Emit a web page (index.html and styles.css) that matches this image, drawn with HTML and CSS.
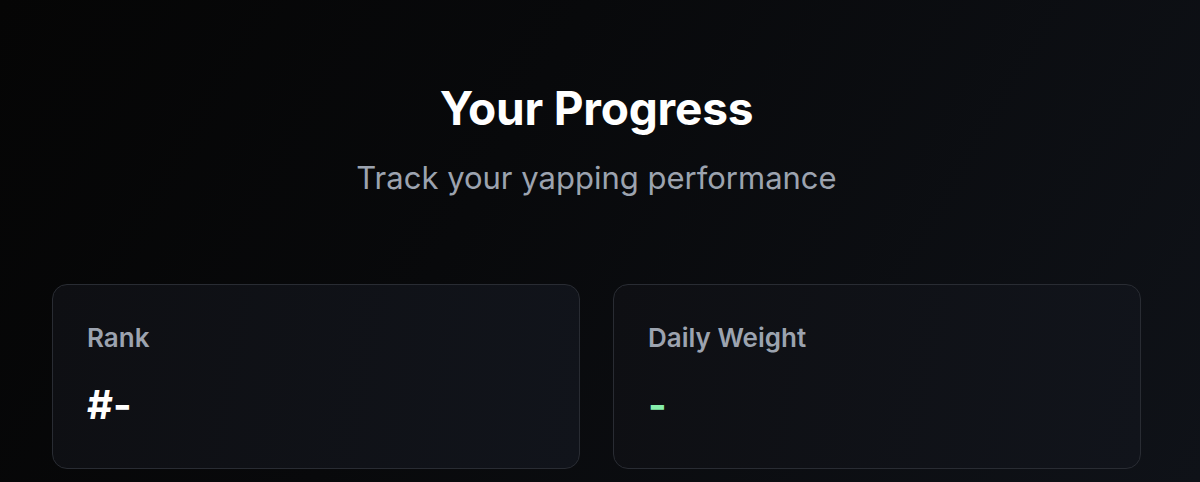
FILE: index.html
```html
<!DOCTYPE html>
<html lang="en">
<head>
  <meta charset="UTF-8" />
  <meta name="viewport" content="width=device-width, initial-scale=1.0" />
  <title>Your Progress</title>
  <link rel="stylesheet" href="styles.css">
</head>
<body>
  <section class="progress">
    <h1 class="progress-title">Your Progress</h1>
    <p class="progress-sub">Track your yapping performance</p>

    <div class="stats">
      <div class="stat-card">
        <div class="stat-label">Rank</div>
        <div class="stat-value">#-</div>
      </div>
      <div class="stat-card">
        <div class="stat-label">Daily Weight</div>
        <div class="stat-value green">-</div>
      </div>
    </div>
  </section>
</body>
</html>
```

FILE: styles.css
```css
html, body {
  height: 100%;
}
body {
  margin: 0;
  font-family: 'Inter', 'Liberation Sans', sans-serif;
  color: #ffffff;
  background: linear-gradient(120deg, #050505 0%, #08090b 40%, #0f1218 100%);
  overflow: hidden;
}
.progress {
  padding: 80px 59px 0 52px;
  display: flex;
  flex-direction: column;
  align-items: center;
}
.progress-title {
  margin: 0;
  font-size: 46px;
  font-weight: 700;
  line-height: 56px;
  letter-spacing: -0.2px;
}
.progress-sub {
  margin: 22px 0 0;
  font-size: 31px;
  line-height: 40px;
  color: #9ca3af;
}
.stats {
  margin-top: 86px;
  width: 100%;
  display: grid;
  grid-template-columns: 1fr 1fr;
  gap: 33px;
}
.stat-card {
  height: 185px;
  box-sizing: border-box;
  padding: 37px 34px 0;
  background: linear-gradient(100deg, #0e0f13 0%, #11141b 100%);
  border: 1.5px solid #292c33;
  border-radius: 15px;
}
.stat-label {
  font-size: 26px;
  font-weight: 600;
  line-height: 32px;
  color: #9ca3af;
}
.stat-value {
  margin-top: 27px;
  font-size: 40px;
  font-weight: 700;
  line-height: 48px;
  color: #ffffff;
}
.stat-value.green {
  color: #86efac;
}
```
